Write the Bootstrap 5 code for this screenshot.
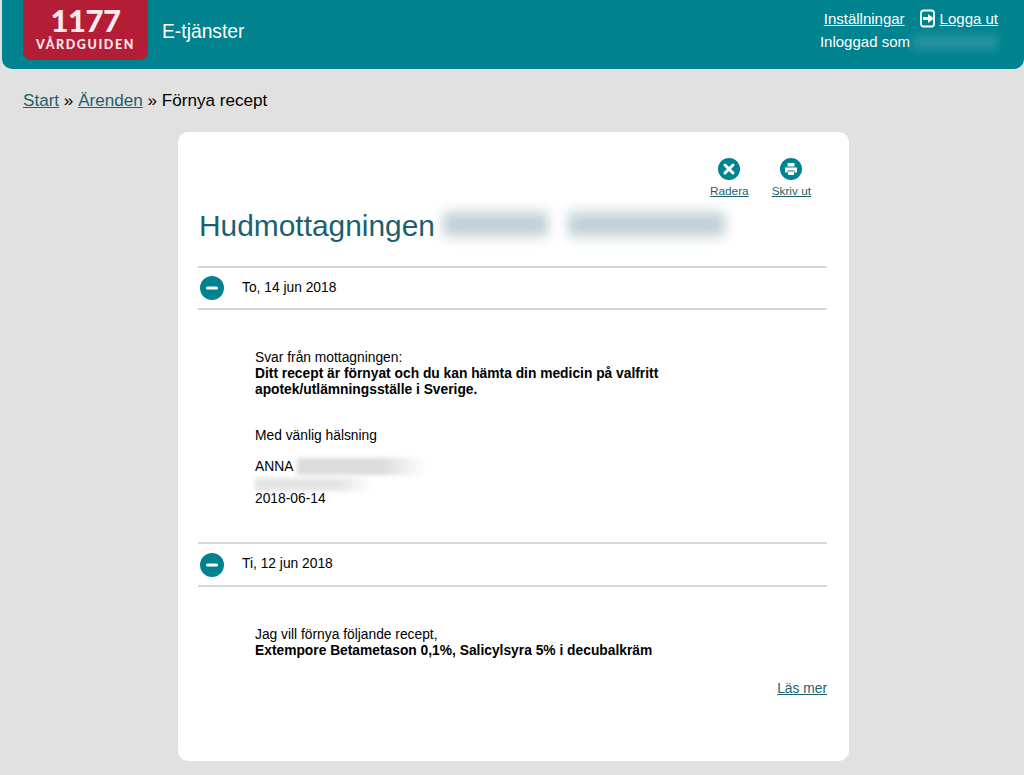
<!DOCTYPE html>
<html lang="sv">
<head>
    <meta charset="UTF-8" />
    <title>Förnya recept</title>
    <link href="https://cdn.jsdelivr.net/npm/bootstrap@5.3.2/dist/css/bootstrap.min.css" rel="stylesheet" />
    <style>
        html, body { height: 775px; overflow: hidden; }
        body { background: #e1e1e1; color: #000; font-family: "Liberation Sans", Arial, sans-serif; font-size: 13.8px; }
        a { color: #1c5f6e; }

        .top-bar { height: 69px; margin-left: 2px; background: #00828f; border-radius: 0 0 10px 10px; color: #fff; }
        .top-bar a { color: #fff; }
        .logo-box { width: 125px; height: 60px; margin-left: 21px; background: #b31e36; border-radius: 0 0 8px 8px; color: #fbe9ec; font-family: Lato, "Liberation Sans", sans-serif; }
        .logo-num { font-size: 31px; font-weight: 900; line-height: 28px; letter-spacing: -.5px; padding-top: 6px; }
        .logo-name { font-size: 12.500px; font-weight: 900; line-height: 13px; letter-spacing: 1.600px; margin-top: 4px; }
        .site-name { font-size: 19.300px; margin-left: 14px; margin-top: 18px; }
        .user-box { width: 204px; margin-right: 26px; font-size: 15px; line-height: 23px; padding-top: 7px; }
        .link-gap { margin-left: 15px; }
        .blur-head { display: block; width: 86px; height: 16px; margin-left: 2px; background: rgba(255,255,255,.14); filter: blur(5px); }

        .crumbs { font-size: 17.100px; padding: 20px 0 0 23px; line-height: 24px; height: 63px; }

        .main-card { width: 671px; height: 629px; margin-left: 178px; background: #fff; border-radius: 10px; padding: 0 22px 0 20px; }
        .tool-row { padding-top: 26px; gap: 23px; padding-right: 16px; height: 74px; font-size: 11.800px; }
        .tool-item { line-height: 14px; }
        .tool-item svg { display: block; margin: 0 auto 4px; }
        .case-title { font-size: 29.900px; color: #1c5f6e; line-height: 40px; height: 60px; padding-left: 1px; margin: 0; font-weight: 400; }
        .blob-wrap { gap: 20px; margin-left: 8px; padding-top: 3px; }
        .blob-title { display: block; height: 30px; background: linear-gradient(to bottom, #e6edef, #bccdd3 40%, #bccdd3 65%, #e6edef); filter: blur(6px); }
        .date-row { height: 44px; border-top: 2px solid #d8d8d8; border-bottom: 2px solid #d8d8d8; gap: 18px; padding-left: 2px; }
        .date-row-tall { height: 45px; }
        .msg-text { padding-left: 57px; line-height: 16px; }
        .blur-name { display: block; width: 130px; height: 17px; background: linear-gradient(to right, #dcdcdc 65%, #fff); filter: blur(2px); }
        .blur-role { display: block; width: 118px; height: 13px; margin-top: 3px; background: linear-gradient(to right, #e4e4e4 70%, #fff); filter: blur(2px); }
    </style>
</head>
<body>
    <header class="top-bar d-flex">
        <div class="logo-box text-center">
            <div class="logo-num">1177</div>
            <div class="logo-name">VÅRDGUIDEN</div>
        </div>
        <div class="site-name">E-tjänster</div>
        <div class="user-box ms-auto">
            <div class="d-flex justify-content-end">
                <a href="#">Inställningar</a>
                <a href="#" class="d-flex align-items-center link-gap">
                    <svg width="16" height="19" viewBox="0 0 16 19" class="me-1"><rect x="1" y="1.500" width="13" height="16" rx="2.500" fill="none" stroke="#fff" stroke-width="1.800"/><path d="M3 8h5V5l6 4.500-6 4.500v-3H3z" fill="#fff"/></svg>
                    <span>Logga ut</span>
                </a>
            </div>
            <div class="d-flex align-items-center justify-content-end">
                <span>Inloggad som</span>
                <span class="blur-head"></span>
            </div>
        </div>
    </header>

    <nav class="crumbs"><a href="#">Start</a> » <a href="#">Ärenden</a> » Förnya recept</nav>

    <main class="main-card">
        <div class="tool-row d-flex justify-content-end">
            <a href="#" class="tool-item text-center">
                <svg width="22" height="22" viewBox="0 0 22 22"><circle cx="11" cy="11" r="11" fill="#00828f"/><path d="M7 7l8 8M15 7l-8 8" stroke="#fff" stroke-width="3" stroke-linecap="round"/></svg>
                Radera
            </a>
            <a href="#" class="tool-item text-center">
                <svg width="22" height="22" viewBox="0 0 22 22"><circle cx="11" cy="11" r="11" fill="#00828f"/><path d="M7.500 5h7v3.500h-7zM5 9.500h12v5h-2.500v-2h-7v2H5zM8 13.500h6V17H8z" fill="#fff"/></svg>
                Skriv ut
            </a>
        </div>
        <h1 class="case-title d-flex">
            <span>Hudmottagningen</span>
            <span class="blob-wrap d-flex">
                <span class="blob-title" style="width:105px"></span>
                <span class="blob-title" style="width:157px"></span>
            </span>
        </h1>

        <div class="date-row d-flex align-items-center">
            <svg width="24" height="24" viewBox="0 0 24 24"><circle cx="12" cy="12" r="12" fill="#00828f"/><rect x="6" y="10.500" width="12" height="3" rx="1.500" fill="#fff"/></svg>
            <span>To, 14 jun 2018</span>
        </div>
        <div class="msg-text" style="height:232px;padding-top:40px">
            <div>Svar från mottagningen:</div>
            <div><b>Ditt recept är förnyat och du kan hämta din medicin på valfritt<br>apotek/utlämningsställe i Sverige.</b></div>
            <div style="margin-top:30px">Med vänlig hälsning</div>
            <div class="d-flex align-items-center" style="margin-top:14px">ANNA <span class="blur-name ms-1"></span></div>
            <span class="blur-role"></span>
            <div>2018-06-14</div>
        </div>

        <div class="date-row date-row-tall d-flex align-items-center">
            <svg width="24" height="24" viewBox="0 0 24 24"><circle cx="12" cy="12" r="12" fill="#00828f"/><rect x="6" y="10.500" width="12" height="3" rx="1.500" fill="#fff"/></svg>
            <span>Ti, 12 jun 2018</span>
        </div>
        <div class="msg-text" style="padding-top:40px">
            <div>Jag vill förnya följande recept,</div>
            <div><b>Extempore Betametason 0,1%, Salicylsyra 5% i decubalkräm</b></div>
        </div>
        <div class="text-end" style="margin-top:20px"><a href="#">Läs mer</a></div>
    </main>

    <script src="https://cdn.jsdelivr.net/npm/bootstrap@5.3.2/dist/js/bootstrap.bundle.min.js"></script>
</body>
</html>
